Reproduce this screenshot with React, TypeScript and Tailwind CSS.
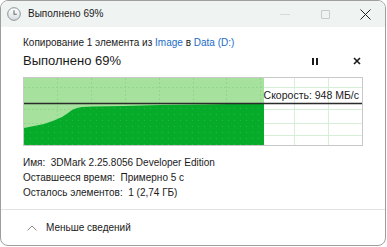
import React from "react";

const font = { fontFamily: '"Liberation Sans", Arial, sans-serif' };

function ClockIcon() {
  return (
    <svg width="14" height="14" viewBox="0 0 14 14">
      <defs>
        <linearGradient id="cg" x1="0" y1="0" x2="0" y2="1">
          <stop offset="0" stopColor="#ffffff" />
          <stop offset="1" stopColor="#d9dde0" />
        </linearGradient>
      </defs>
      <circle cx="7" cy="7" r="6.3" fill="url(#cg)" stroke="#8a8f94" strokeWidth="1" />
      <path d="M7 3.2 V7.3 H9.8" fill="none" stroke="#6b7075" strokeWidth="1.1" />
    </svg>
  );
}

function Graph() {
  const W = 338;
  const H = 67;
  const filled = 240;
  const vlines = Array.from({ length: 9 }, (_, i) => Math.round((i + 1) * 33.9) - 0.5);
  const hlines = [9.5, 31.5, 45.5, 57.5];
  const curve =
    "M0 50 L10 48 L20 46 L30 42.5 L38 39 L44 35 L48 32 L53 30 L58 29 L70 28.5 L100 28 L136 27 L180 26.5 L206 26 L240 26 L240 67 L0 67 Z";
  return (
    <div className="relative mt-[6px] w-[340px] h-[69px] border border-[#c8c8c8] bg-white">
      <svg width={W} height={H} className="block">
        <defs>
          <pattern id="dots" width="6" height="6" patternUnits="userSpaceOnUse">
            <rect x="0" y="0" width="1" height="1" fill="#3cc058" opacity="0.6" />
          </pattern>
        </defs>
        {hlines.map((y) => (
          <line key={"h" + y} x1={0} x2={W} y1={y} y2={y} stroke="#d6efd6" strokeWidth="1" />
        ))}
        {vlines.map((x) => (
          <line key={"v" + x} x1={x} x2={x} y1={0} y2={H} stroke="#d6efd6" strokeWidth="1" />
        ))}
        <rect x="0" y="0" width={filled} height={H} fill="#a6e19e" />
        {hlines.map((y) => (
          <line key={"hg" + y} x1={0} x2={filled} y1={y} y2={y} stroke="#92d68a" strokeWidth="1" strokeDasharray="2 2" />
        ))}
        {vlines
          .filter((x) => x < filled)
          .map((x) => (
            <line key={"vg" + x} x1={x} x2={x} y1={0} y2={H} stroke="#92d68a" strokeWidth="1" strokeDasharray="2 2" />
          ))}
        <path d={curve} fill="#06ab2a" />
        <path d={curve} fill="url(#dots)" />
        <line x1="0" x2={W} y1="25.5" y2="25.5" stroke="#2b2b2b" strokeWidth="1.4" />
      </svg>
      <div
        className="absolute right-[3px] top-[11px] text-[10.5px] leading-[13px] text-[#1a1a1a]"
        style={font}
      >
        Скорость: 948 МБ/с
      </div>
    </div>
  );
}

export default function App() {
  return (
    <div className="w-[387px] h-[247px] bg-white" style={font}>
      <div className="w-[386px] h-[246px] border border-[#9e9e9e] rounded-[8px] overflow-hidden flex flex-col bg-white">
        <div className="h-[26px] shrink-0 bg-[#eff3f2] flex items-center">
          <div className="ml-[6px] w-[14px] h-[14px] flex items-center justify-center">
            <ClockIcon />
          </div>
          <div className="ml-[7px] text-[10px] leading-[14px] text-[#1a1a1a]">Выполнено 69%</div>
          <div className="ml-auto flex items-center">
            <div className="w-[40px] h-[26px] flex items-center justify-center">
              <div className="w-[10px] h-px bg-[#d8d8d8]" />
            </div>
            <div className="w-[40px] h-[26px] flex items-center justify-center">
              <div className="w-[9px] h-[9px] border border-[#c9c9c9] rounded-[1px]" />
            </div>
            <div className="w-[40px] h-[26px] flex items-center justify-center">
              <svg width="11" height="11" viewBox="0 0 11 11">
                <path d="M0.5 0.5 L10.5 10.5 M10.5 0.5 L0.5 10.5" stroke="#1f1f1f" strokeWidth="1" />
              </svg>
            </div>
          </div>
        </div>
        <div className="pl-[22px] pt-[8px] flex flex-col">
          <div className="text-[10px] leading-[16px] text-[#1a1a1a]">
            Копирование 1 элемента из <span className="text-[#1a6cc8]">Image</span> в{" "}
            <span className="text-[#1a6cc8]">Data (D:)</span>
          </div>
          <div className="flex items-center h-[20px] pr-[24px]">
            <div className="text-[13px] leading-[20px] text-[#1a1a1a]">Выполнено 69%</div>
            <div className="ml-auto flex items-center">
              <div className="flex gap-[2px]">
                <div className="w-[2px] h-[7px] bg-[#1a1a1a]" />
                <div className="w-[2px] h-[7px] bg-[#1a1a1a]" />
              </div>
              <div className="ml-[35px]">
                <svg width="8" height="8" viewBox="0 0 8 8">
                  <path d="M1 1 L7 7 M7 1 L1 7" stroke="#1a1a1a" strokeWidth="1.6" />
                </svg>
              </div>
            </div>
          </div>
          <Graph />
          <div className="mt-[9px] text-[10px] leading-[15px] text-[#1a1a1a]">
            <div>Имя:&nbsp; 3DMark 2.25.8056 Developer Edition</div>
            <div>Оставшееся время:&nbsp; Примерно 5 с</div>
            <div>Осталось элементов:&nbsp; 1 (2,74 ГБ)</div>
          </div>
        </div>
        <div className="mt-[9px] h-px bg-[#e3e3e3]" />
        <div className="flex-1 flex items-center pl-[26px]">
          <svg width="10" height="6" viewBox="0 0 10 6">
            <path d="M0.5 5.5 L5 1 L9.5 5.5" fill="none" stroke="#8a8a8a" strokeWidth="1" />
          </svg>
          <div className="ml-[9px] text-[10px] leading-[16px] text-[#1a1a1a]">Меньше сведений</div>
        </div>
      </div>
    </div>
  );
}
